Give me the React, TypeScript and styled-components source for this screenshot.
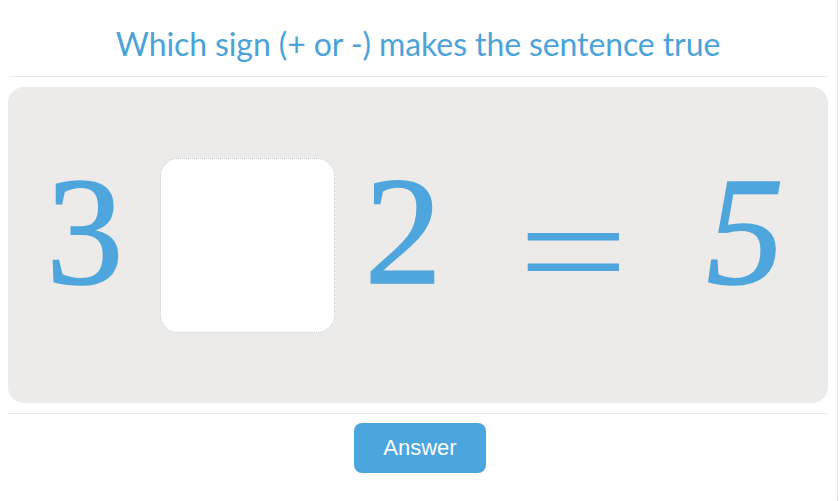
import { createGlobalStyle } from "styled-components";
import styled from "styled-components";

const GlobalStyle = createGlobalStyle`
  html, body {
    margin: 0;
    padding: 0;
    background: #ffffff;
  }
`;

const Page = styled.div`
  width: 838px;
  height: 501px;
  box-sizing: border-box;
  border-right: 1px dotted #cfcfcf;
  padding: 0 9px 0 8px;
  display: flex;
  flex-direction: column;
`;

const Header = styled.div`
  height: 77px;
  box-sizing: border-box;
  border-bottom: 1px solid #e8e8e8;
  display: flex;
  align-items: center;
  justify-content: center;
  padding-top: 10px;
  margin: 0 1px;
`;

const Title = styled.h1`
  margin: 0;
  font-family: Lato, "Open Sans", sans-serif;
  font-weight: 400;
  font-size: 32px;
  letter-spacing: -0.1px;
  color: #4ba3d8;
`;

const Board = styled.div`
  margin-top: 10px;
  height: 316px;
  border-radius: 16px;
  background: #ecebe9;
  display: flex;
  align-items: center;
  padding-left: 38px;
`;

const Num = styled.span<{ $ml?: number; $italic?: boolean }>`
  font-family: "Liberation Serif", "Times New Roman", serif;
  font-size: 155px;
  line-height: 1;
  color: #4fa6dc;
  font-style: ${(p) => (p.$italic ? "italic" : "normal")};
  margin-left: ${(p) => p.$ml ?? 0}px;
  margin-bottom: 28px;
  -webkit-text-stroke: 1.5px #4fa6dc;
`;

const Equals = styled.span`
  font-family: "Liberation Serif", "Times New Roman", serif;
  font-size: 196px;
  line-height: 1;
  color: #4fa6dc;
  margin-left: 76px;
  margin-top: 14px;
  transform: scaleY(0.78);
`;

const Slot = styled.div`
  width: 173px;
  height: 173px;
  margin-left: 36px;
  border: 1px dotted #c6c6c6;
  border-radius: 18px;
  background: #ffffff;
`;

const Footer = styled.div`
  margin-top: 10px;
  border-top: 1px solid #e8e8e8;
  display: flex;
  justify-content: center;
  padding-top: 9px;
`;

const AnswerButton = styled.button`
  width: 132px;
  height: 50px;
  border: none;
  border-radius: 8px;
  background: #4ba6dd;
  color: #ffffff;
  font-family: "Liberation Sans", Arial, sans-serif;
  font-size: 22px;
  cursor: pointer;
  margin-left: 4px;
`;

const App = () => {
  return (
    <>
      <GlobalStyle />
      <Page>
        <Header>
          <Title>Which sign (+ or -) makes the sentence true</Title>
        </Header>
        <Board>
          <Num>3</Num>
          <Slot />
          <Num $ml={30}>2</Num>
          <Equals>=</Equals>
          <Num $ml={78} $italic>
            5
          </Num>
        </Board>
        <Footer>
          <AnswerButton>Answer</AnswerButton>
        </Footer>
      </Page>
    </>
  );
};

export default App;
